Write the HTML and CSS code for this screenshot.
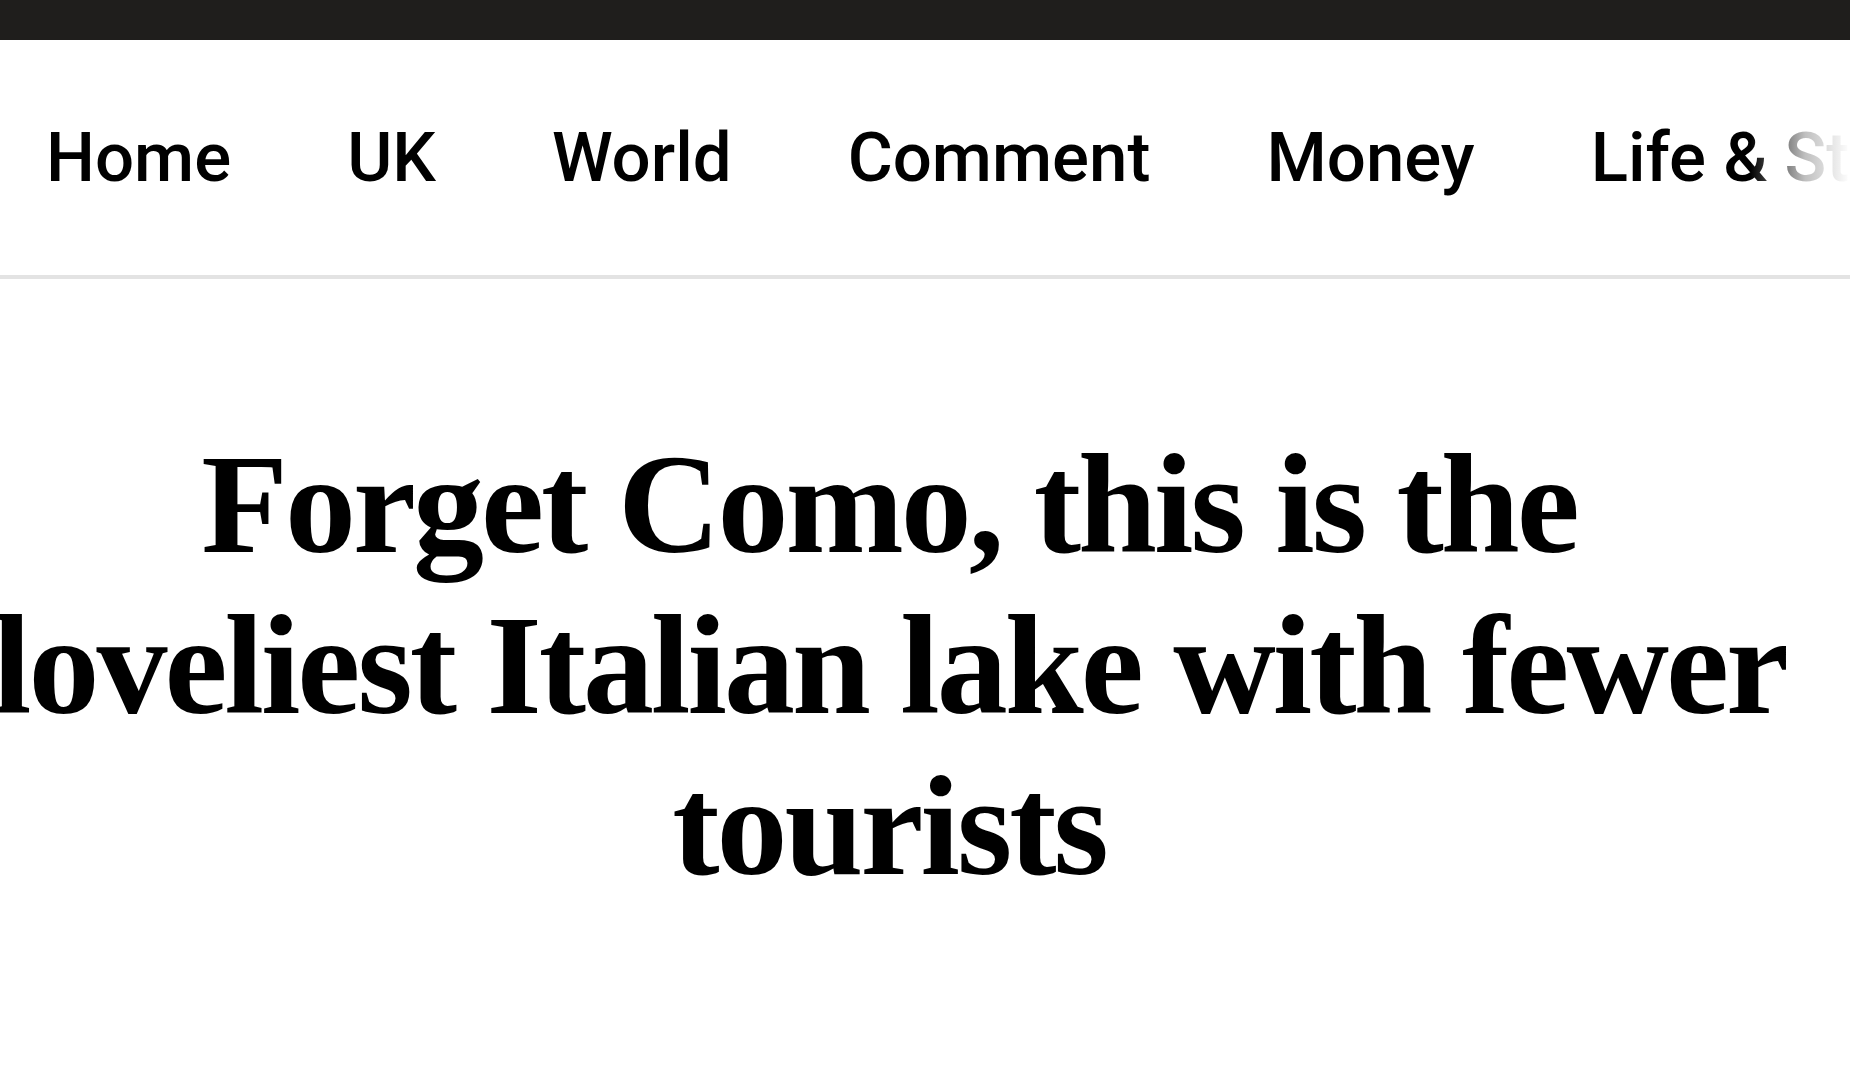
FILE: index.html
```html
<!DOCTYPE html>
<html lang="en">
<head>
<meta charset="utf-8">
<title>Forget Como, this is the loveliest Italian lake with fewer tourists</title>
<link rel="stylesheet" href="styles.css">
</head>
<body>
<div class="topbar"></div>
<nav class="nav">
  <ul class="nav-list">
    <li class="nav-item">Home</li>
    <li class="nav-item">UK</li>
    <li class="nav-item">World</li>
    <li class="nav-item">Comment</li>
    <li class="nav-item">Money</li>
    <li class="nav-item">Life &amp; Style</li>
    <li class="nav-item">Travel</li>
  </ul>
  <div class="nav-fade"></div>
</nav>
<main class="article">
  <h1 class="headline">Forget Como, this is the loveliest Italian lake with fewer tourists</h1>
</main>
</body>
</html>
```
FILE: styles.css
```css
html, body {
  margin: 0;
  padding: 0;
  background: #ffffff;
  overflow: hidden;
}

body {
  width: 1850px;
  height: 1080px;
  font-family: Roboto, "Liberation Sans", sans-serif;
  color: #000;
}

.topbar {
  height: 40px;
  background: #1f1e1c;
}

.nav {
  position: relative;
  height: 235px;
  border-bottom: 4px solid #e3e3e3;
  display: flex;
  align-items: center;
  overflow: hidden;
}

.nav-list {
  list-style: none;
  margin: 0;
  padding: 0 0 0 46px;
  display: flex;
  gap: 116px;
  white-space: nowrap;
}

.nav-item {
  font-size: 69px;
  font-weight: 500;
  line-height: 81px;
  color: #000;
}

.nav-fade {
  position: absolute;
  top: 0;
  right: 0;
  bottom: 0;
  width: 100px;
  background: linear-gradient(to right, rgba(255,255,255,0) 0%, rgba(255,255,255,0.75) 55%, #fff 100%);
}

.article {
  padding-top: 145px;
}

.headline {
  width: 1822px;
  margin: 0 0 0 -22px;
  text-align: center;
  font-family: "Liberation Serif", "Times New Roman", serif;
  font-weight: 700;
  font-size: 142px;
  line-height: 161px;
  letter-spacing: -3px;
  color: #000;
}
```
